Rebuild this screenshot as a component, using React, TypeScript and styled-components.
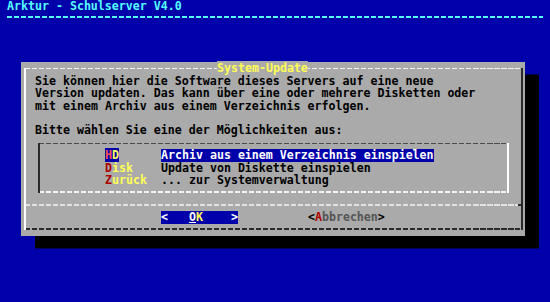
import styled, { createGlobalStyle } from 'styled-components';

// console grid: one character cell is COL x ROW pixels
const COL = 7;
const ROW = 12.44;

const colors = {
  blue: '#0000aa',
  grey: '#aaaaaa',
  cyan: '#55ffff',
  yellow: '#ffff55',
  red: '#aa0000',
  brightRed: '#ff5555',
  white: '#ffffff',
  light: '#f4f4f4',
  dark: '#2a2a2a',
  dim: '#555555',
};

const dashes = (color: string) =>
  `repeating-linear-gradient(90deg, ${color} 0 5.5px, transparent 5.5px ${COL}px)`;

const GlobalStyle = createGlobalStyle`
  html, body {
    margin: 0;
    padding: 0;
    background: ${colors.blue};
  }
  body {
    font-family: "DejaVu Sans Mono", "Liberation Mono", monospace;
    font-weight: bold;
    font-size: 11.627px;
    line-height: ${ROW}px;
  }
`;

const Screen = styled.div`
  width: 550px;
  height: 302px;
  overflow: hidden;
  background: ${colors.blue};
  color: #000;
`;

const Header = styled.header`
  padding: 0 ${COL}px;
`;

const HeaderTitle = styled.div`
  height: ${ROW}px;
  color: ${colors.cyan};
  white-space: pre;
`;

const HeaderRule = styled.div`
  height: ${ROW}px;
  background: ${dashes(colors.cyan)} left 4px / 100% 2px no-repeat;
`;

const Dialog = styled.section`
  box-sizing: border-box;
  width: ${72 * COL}px;
  height: ${14 * ROW}px;
  margin: ${3 * ROW}px 0 0 ${3 * COL}px;
  padding: ${ROW / 2}px 2.5px;
  background: ${colors.grey};
  box-shadow: ${2 * COL}px ${ROW}px 0 0 #000;
`;

const Frame = styled.div`
  box-sizing: border-box;
  height: ${13 * ROW}px;
  display: flex;
  flex-direction: column;
  border-left: 2px solid ${colors.white};
  border-right: 2px solid ${colors.dark};
  background:
    ${dashes(colors.light)} left -1px top -1px / 100% 2px no-repeat,
    ${dashes(colors.dark)} left -1px bottom 0 / 100% 2px no-repeat;
`;

const TitleBar = styled.div`
  height: ${ROW}px;
  margin-top: -${ROW / 2}px;
  padding-left: 191.5px;
`;

const Title = styled.span`
  color: ${colors.yellow};
  background: ${colors.grey};
  white-space: pre;
`;

const TextBlock = styled.div`
  padding-left: 9.5px;
`;

const Line = styled.div`
  height: ${ROW}px;
  white-space: pre;
`;

const MenuBox = styled.div`
  box-sizing: border-box;
  height: ${4 * ROW}px;
  margin: ${ROW / 2}px 12px;
  padding: ${ROW / 2}px 0 ${ROW / 2}px 65.5px;
  border-left: 2px solid ${colors.dark};
  border-right: 2px solid ${colors.white};
  background:
    ${dashes('#4a4a4a')} left -1px top -1px / 100% 2px no-repeat,
    ${dashes(colors.light)} left -1px bottom 0 / 100% 2px no-repeat;
`;

const MenuItem = styled.div`
  display: flex;
  height: ${ROW}px;
  white-space: pre;
`;

const Tag = styled.span`
  width: ${8 * COL}px;
  flex-shrink: 0;
`;

const TagText = styled.span<{ $selected?: boolean }>`
  color: ${colors.yellow};
  background: ${(p) => (p.$selected ? colors.blue : 'transparent')};
`;

const TagKey = styled.span<{ $selected?: boolean }>`
  color: ${(p) => (p.$selected ? colors.brightRed : colors.red)};
`;

const Description = styled.span<{ $selected?: boolean }>`
  color: ${(p) => (p.$selected ? colors.white : '#000')};
  background: ${(p) => (p.$selected ? colors.blue : 'transparent')};
`;

const Separator = styled.div`
  position: relative;
  height: ${ROW}px;
  background: ${dashes('#e2e2e2')} left -1px center / 100% 2px no-repeat;

  &::after {
    content: '';
    position: absolute;
    right: 0;
    top: calc(50% - 1px);
    width: 3px;
    height: 2px;
    background: ${colors.dark};
  }
`;

const ButtonRow = styled.div`
  display: flex;
  gap: ${10 * COL}px;
  height: ${ROW}px;
  padding-left: 135.5px;
  white-space: pre;
`;

const Button = styled.span<{ $active?: boolean }>`
  color: ${(p) => (p.$active ? colors.white : '#000')};
  background: ${(p) => (p.$active ? colors.blue : 'transparent')};
`;

const Hotkey = styled.span<{ $active?: boolean }>`
  color: ${(p) => (p.$active ? colors.white : colors.red)};
  text-decoration: ${(p) => (p.$active ? 'underline' : 'none')};
  text-underline-offset: 1px;
`;

const Accent = styled.span`
  color: ${colors.yellow};
`;

const Dim = styled.span`
  color: ${colors.dim};
`;

type Entry = { key: string; rest: string; text: string };

const entries: Entry[] = [
  { key: 'H', rest: 'D', text: 'Archiv aus einem Verzeichnis einspielen' },
  { key: 'D', rest: 'isk', text: 'Update von Diskette einspielen' },
  { key: 'Z', rest: 'urück', text: '... zur Systemverwaltung' },
];

const intro = [
  'Sie können hier die Software dieses Servers auf eine neue',
  'Version updaten. Das kann über eine oder mehrere Disketten oder',
  'mit einem Archiv aus einem Verzeichnis erfolgen.',
  '',
  'Bitte wählen Sie eine der Möglichkeiten aus:',
];

function App() {
  const selected = 0;

  return (
    <Screen>
      <GlobalStyle />
      <Header>
        <HeaderTitle>Arktur - Schulserver V4.0</HeaderTitle>
        <HeaderRule />
      </Header>
      <Dialog>
        <Frame>
          <TitleBar>
            <Title>System-Update</Title>
          </TitleBar>
          <TextBlock>
            {intro.map((line, i) => (
              <Line key={i}>{line}</Line>
            ))}
          </TextBlock>
          <MenuBox>
            {entries.map((entry, i) => (
              <MenuItem key={entry.key}>
                <Tag>
                  <TagText $selected={i === selected}>
                    <TagKey $selected={i === selected}>{entry.key}</TagKey>
                    {entry.rest}
                  </TagText>
                </Tag>
                <Description $selected={i === selected}>{entry.text}</Description>
              </MenuItem>
            ))}
          </MenuBox>
          <Separator />
          <ButtonRow>
            <Button $active>
              {'<   '}
              <Hotkey $active>O</Hotkey>
              <Accent>K</Accent>
              {'    >'}
            </Button>
            <Button>
              {'<'}
              <Hotkey>A</Hotkey>
              <Dim>bbrechen</Dim>
              {'>'}
            </Button>
          </ButtonRow>
        </Frame>
      </Dialog>
    </Screen>
  );
}

export default App;
